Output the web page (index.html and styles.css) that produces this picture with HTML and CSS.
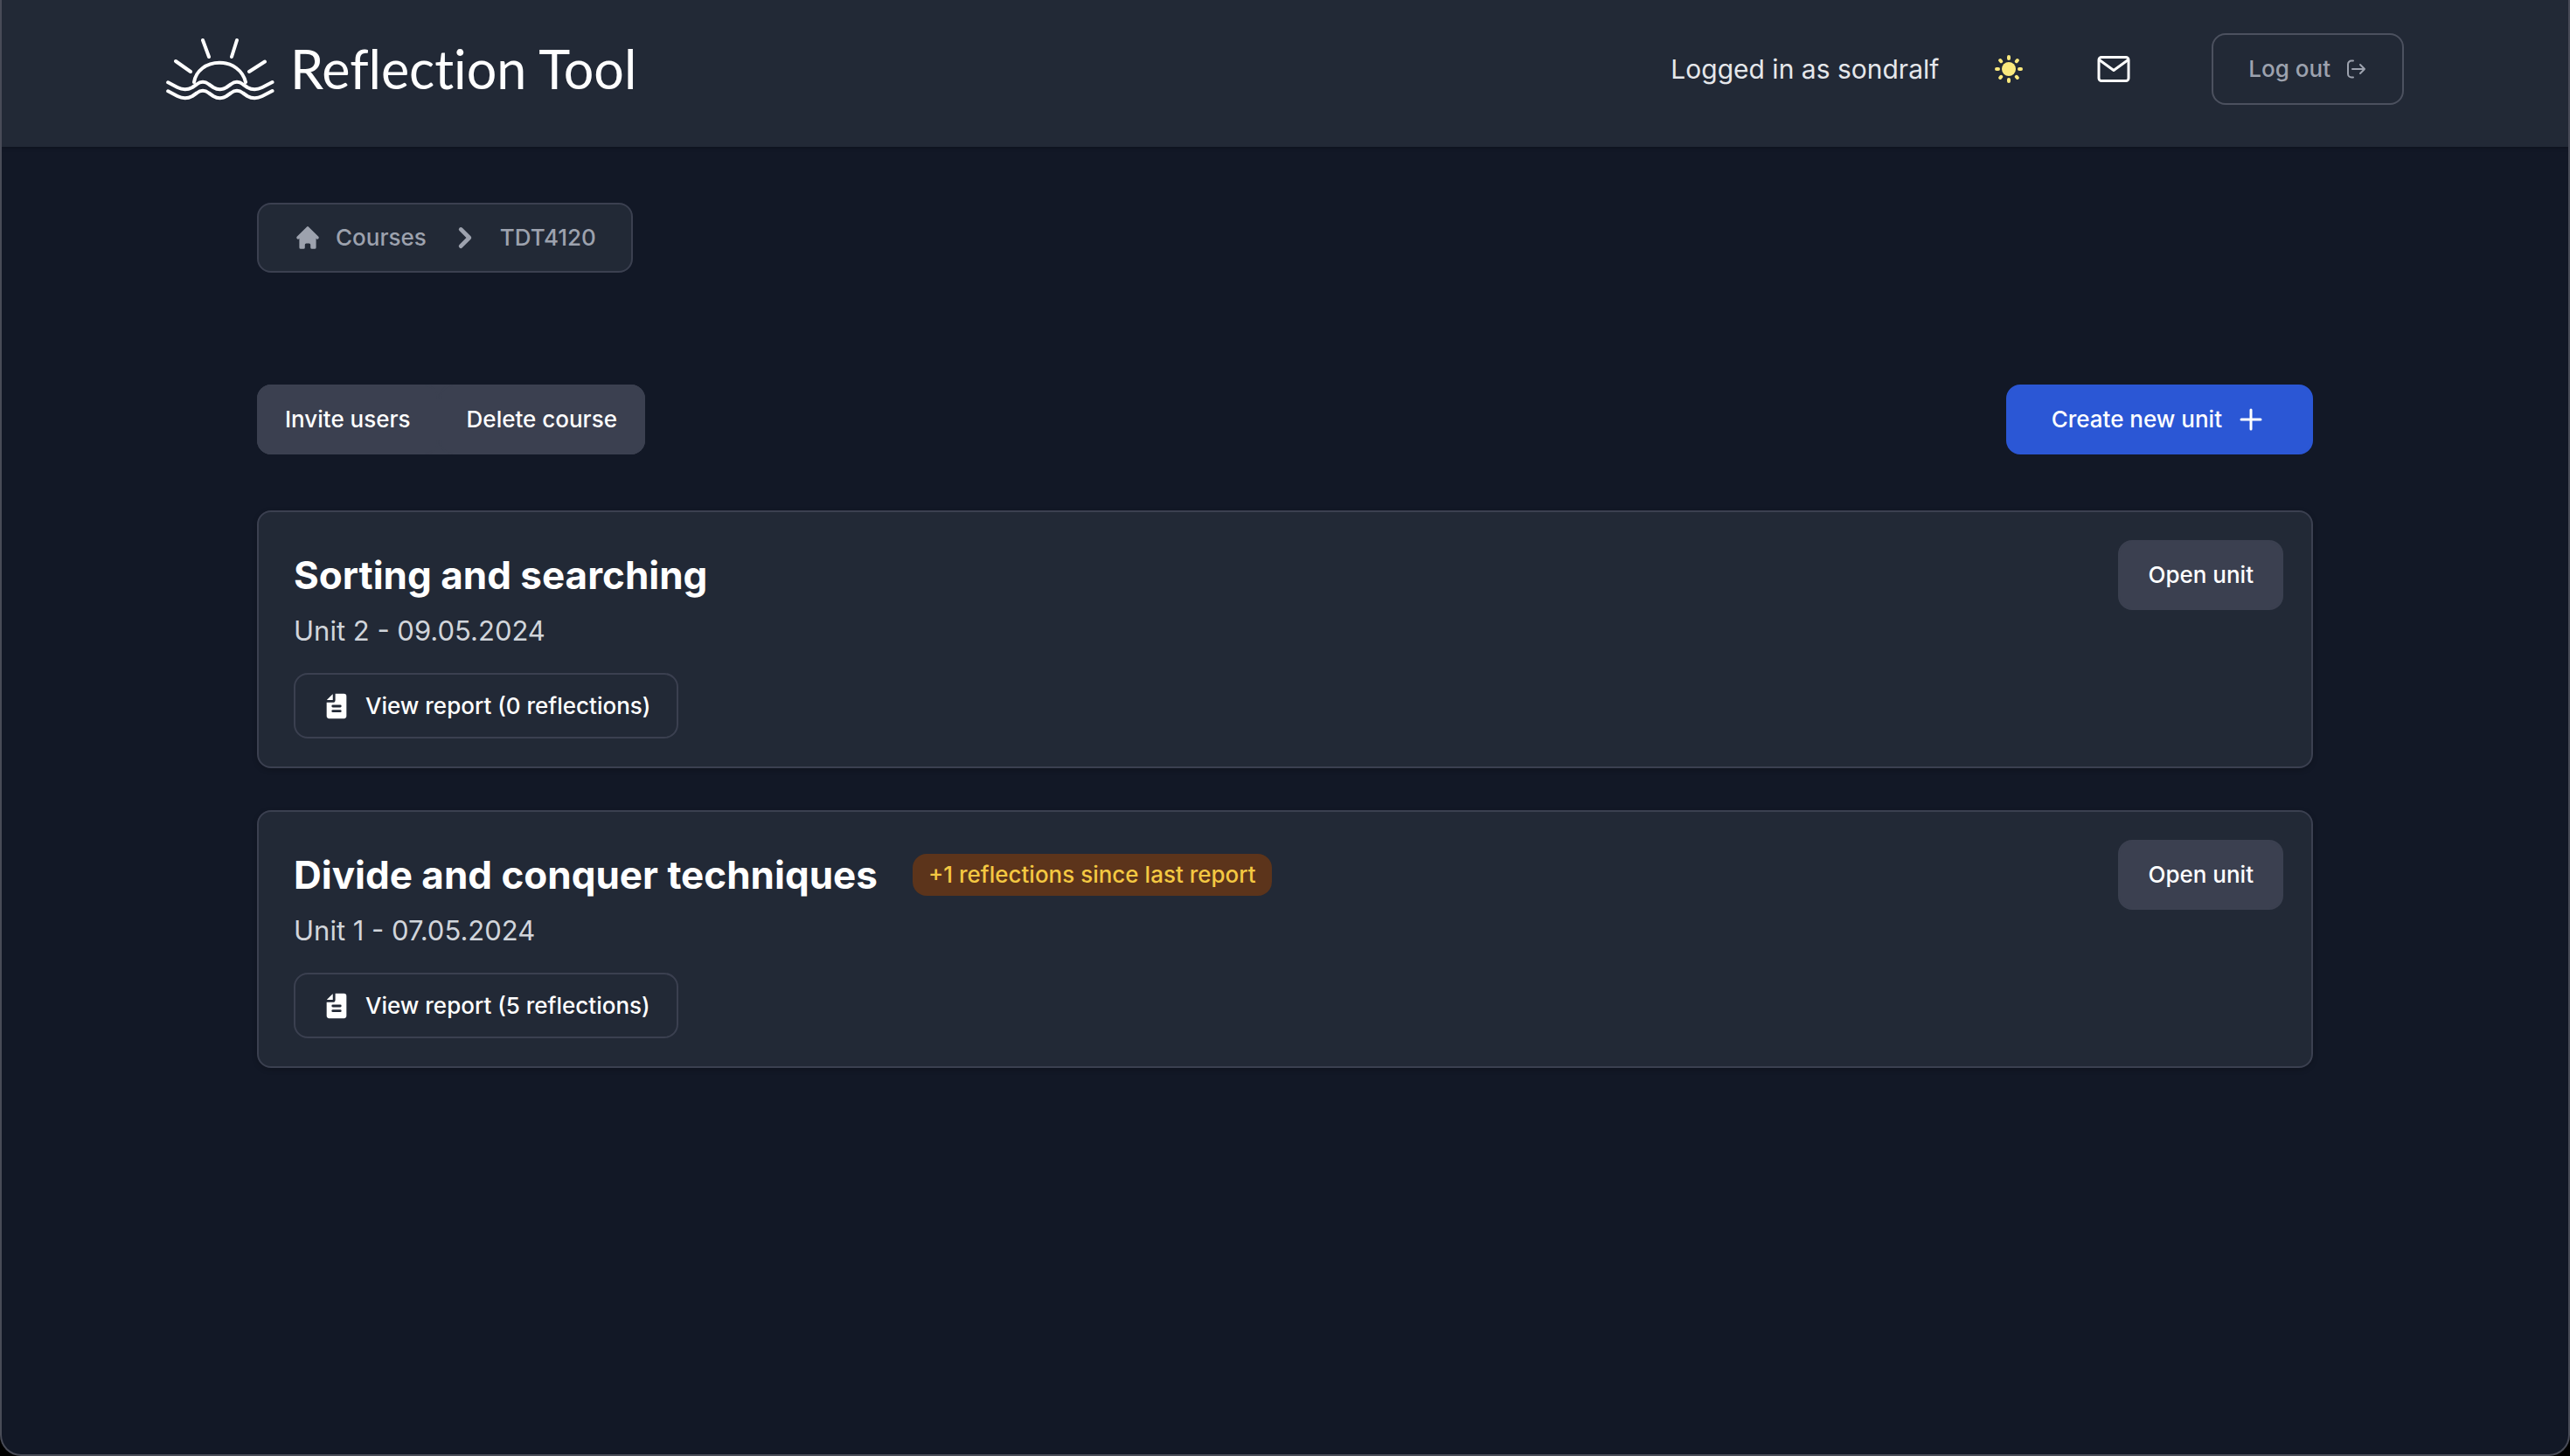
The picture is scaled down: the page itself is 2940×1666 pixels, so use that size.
FILE: index.html
```html
<!DOCTYPE html>
<html lang="en">
<head>
<meta charset="utf-8">
<title>Reflection Tool</title>
<link rel="stylesheet" href="styles.css">
</head>
<body>
<div class="app">
  <header class="header">
    <div class="header-inner">
      <a class="brand" href="#">
        <svg class="brand-logo" viewBox="0 0 124 72" fill="none" stroke="currentColor" stroke-width="4" stroke-linecap="round" stroke-linejoin="round" aria-hidden="true">
          <path d="M42 3l7 19M81 3l-6 19M11 27l17 12M113 27.500l-18 11.500"/>
          <path d="M32 51C34 38 46 28.700 61 28.700S88 38 91 51"/>
          <path d="M2.200 51.300L13 57Q21.800 61.500 30 57L35 53.500Q42 48 49 53.500L54 57Q61.500 61.500 69 57L74 53.500Q81 48 88 53.500L93 57Q101 61.500 110 57L121.500 51"/>
          <path d="M2.200 61.300L13 67Q21.800 71.500 30 67L35 63.500Q42 58 49 63.500L54 67Q61.500 71.500 69 67L74 63.500Q81 58 88 63.500L93 67Q101 71.500 110 67L121.500 61"/>
        </svg>
        <span class="brand-name">Reflection Tool</span>
      </a>
      <div class="header-tools">
        <span class="user">Logged in as sondralf</span>
        <button class="icon-button sun" type="button" aria-label="Toggle theme">
          <svg width="32" height="32" viewBox="0 0 32 32" aria-hidden="true">
            <circle cx="16" cy="16" r="8" fill="currentColor"/>
            <path d="M16 2v2M16 28v2M2 16h2M28 16h2M6.200 6l1 1.200M25.800 6l-1 1.200M6.200 26l1-1.200M25.800 26l-1-1.200" stroke="currentColor" stroke-width="4" stroke-linecap="round"/>
          </svg>
        </button>
        <button class="icon-button mail" type="button" aria-label="Messages">
          <svg width="38" height="32" viewBox="0 0 38 32" fill="none" stroke="currentColor" stroke-width="3" stroke-linejoin="round" aria-hidden="true">
            <rect x="2" y="2.500" width="34" height="27" rx="3"/>
            <path d="M2.500 5.500L19 17.500 35.500 5.500"/>
          </svg>
        </button>
        <button class="button button-outline logout" type="button">
          Log out
          <svg width="26" height="26" viewBox="0 0 26 26" fill="none" stroke="currentColor" stroke-width="2" stroke-linecap="round" stroke-linejoin="round" aria-hidden="true">
            <path d="M10 3.500H8a4 4 0 0 0-4 4v11a4 4 0 0 0 4 4h2M9 13h14M18 8l5 5-5 5"/>
          </svg>
        </button>
      </div>
    </div>
  </header>
  <main class="content">
    <nav class="breadcrumb" aria-label="Breadcrumb">
      <a class="crumb" href="#">
        <svg width="32" height="32" viewBox="0 0 20 20" fill="currentColor" aria-hidden="true"><path d="M10.707 2.293a1 1 0 00-1.414 0l-7 7a1 1 0 001.414 1.414L4 10.414V17a1 1 0 001 1h2a1 1 0 001-1v-2a1 1 0 011-1h2a1 1 0 011 1v2a1 1 0 001 1h2a1 1 0 001-1v-6.586l.293.293a1 1 0 001.414-1.414l-7-7z"/></svg>
        Courses
      </a>
      <svg class="crumb-separator" width="48" height="48" viewBox="0 0 20 20" fill="currentColor" aria-hidden="true"><path d="M7.293 14.707a1 1 0 010-1.414L10.586 10 7.293 6.707a1 1 0 011.414-1.414l4 4a1 1 0 010 1.414l-4 4a1 1 0 01-1.414 0z"/></svg>
      <a class="crumb" href="#">TDT4120</a>
    </nav>
    <div class="actions">
      <div class="button-group">
        <button class="button button-muted" type="button">Invite users</button>
        <button class="button button-muted" type="button">Delete course</button>
      </div>
      <button class="button button-primary" type="button">
        Create new unit
        <svg width="26" height="26" viewBox="0 0 26 26" fill="none" stroke="currentColor" stroke-width="3" stroke-linecap="round" aria-hidden="true"><path d="M13 2v22M2 13h22"/></svg>
      </button>
    </div>
    <section class="units">
      <article class="card">
        <div class="card-body">
          <div class="card-heading"><h2 class="card-title">Sorting and searching</h2></div>
          <p class="card-meta">Unit 2 - 09.05.2024</p>
          <button class="button button-report" type="button">
            <svg width="34" height="34" viewBox="0 0 24 24" fill="currentColor" fill-rule="evenodd" aria-hidden="true"><path d="M9 2.221V7H4.221a2 2 0 0 1 .365-.5L8.500 2.586A2 2 0 0 1 9 2.220ZM11 2v5a2 2 0 0 1-2 2H4v11a2 2 0 0 0 2 2h12a2 2 0 0 0 2-2V4a2 2 0 0 0-2-2h-7ZM8 16a1 1 0 0 1 1-1h6a1 1 0 1 1 0 2H9a1 1 0 0 1-1-1Zm1-5a1 1 0 1 0 0 2h6a1 1 0 1 0 0-2H9Z"/></svg>
            View report (0 reflections)
          </button>
        </div>
        <button class="button button-muted" type="button">Open unit</button>
      </article>
      <article class="card">
        <div class="card-body">
          <div class="card-heading"><h2 class="card-title">Divide and conquer techniques</h2><span class="badge">+1 reflections since last report</span></div>
          <p class="card-meta">Unit 1 - 07.05.2024</p>
          <button class="button button-report" type="button">
            <svg width="34" height="34" viewBox="0 0 24 24" fill="currentColor" fill-rule="evenodd" aria-hidden="true"><path d="M9 2.221V7H4.221a2 2 0 0 1 .365-.5L8.500 2.586A2 2 0 0 1 9 2.220ZM11 2v5a2 2 0 0 1-2 2H4v11a2 2 0 0 0 2 2h12a2 2 0 0 0 2-2V4a2 2 0 0 0-2-2h-7ZM8 16a1 1 0 0 1 1-1h6a1 1 0 1 1 0 2H9a1 1 0 0 1-1-1Zm1-5a1 1 0 1 0 0 2h6a1 1 0 1 0 0-2H9Z"/></svg>
            View report (5 reflections)
          </button>
        </div>
        <button class="button button-muted" type="button">Open unit</button>
      </article>
    </section>
  </main>
</div>
</body>
</html>
```
FILE: styles.css
```css
*, *::before, *::after { box-sizing: border-box; }

html { background: #000; }

body {
  margin: 0;
  font-family: Inter, "Liberation Sans", sans-serif;
  font-size: 26px;
  line-height: 40px;
  color: #fff;
}

h2, p { margin: 0; }

svg { display: block; flex: none; }

a { color: inherit; text-decoration: none; }

.app {
  min-height: 100vh;
  border: 2px solid #484b57;
  border-top: 0;
  border-radius: 0 0 24px 24px;
  background: #121826;
  overflow: hidden;
}

.header {
  padding: 38px 32px 48px;
  background: #222936;
  box-shadow: 0 2px 4px rgba(0, 0, 0, 0.2);
}

.header-inner {
  display: flex;
  align-items: center;
  justify-content: space-between;
  max-width: 2560px;
  margin: 0 auto;
}

.brand { display: flex; align-items: center; gap: 18px; }

.brand-logo { width: 124px; height: 72px; }

.brand-name {
  font-family: Lato, sans-serif;
  font-size: 61px;
  font-variant-ligatures: none;
  line-height: 72px;
}

.header-tools { display: flex; align-items: center; }

.user { font-size: 30px; color: #e5e7eb; }

.icon-button {
  display: flex;
  padding: 0;
  border: 0;
  background: none;
  cursor: pointer;
}

.sun { margin-left: 64px; color: #fae97d; }

.mail { margin-left: 85px; color: #fff; }

.button {
  display: flex;
  align-items: center;
  justify-content: center;
  height: 80px;
  padding: 0 32px;
  border: 2px solid transparent;
  border-radius: 16px;
  background: none;
  color: #fff;
  font: inherit;
  font-weight: 500;
  white-space: nowrap;
  cursor: pointer;
}

.button-outline { border-color: #4c515f; color: #9da2ae; }

.logout { gap: 16px; height: 82px; padding: 0 40px; margin-left: 93px; }

.button-muted { border-color: #3b4050; background: #3b4050; }

.button-primary {
  gap: 20px;
  padding: 0 56px 0 50px;
  border-color: #2b57d5;
  background: #2b57d5;
}

.content { width: 80vw; margin: 0 auto; padding: 64px 0; }

.breadcrumb {
  display: flex;
  align-items: center;
  width: fit-content;
  height: 80px;
  padding: 0 40px;
  border: 2px solid #3b4050;
  border-radius: 16px;
  background: #222936;
  color: #9da2ae;
  font-weight: 500;
}

.crumb { display: flex; align-items: center; gap: 16px; }

.crumb-separator { margin: 0 16px 0 20px; }

.actions {
  display: flex;
  justify-content: space-between;
  margin: 128px 0 64px;
}

.button-group {
  display: flex;
  border-radius: 16px;
  background: #3b4050;
}

.button-group .button { padding: 0 30px; }

.units { display: grid; gap: 48px; }

.card {
  display: flex;
  align-items: flex-start;
  justify-content: space-between;
  padding: 32px;
  border: 2px solid #3b4050;
  border-radius: 16px;
  background: #222936;
  box-shadow: 0 2px 6px rgba(0, 0, 0, 0.2);
}

.card-body { padding-left: 8px; }

.card-heading { display: flex; align-items: center; gap: 40px; height: 80px; }

.card-title { font-size: 44px; font-weight: 700; line-height: 56px; }

.card-meta { margin-bottom: 24px; font-size: 31px; line-height: 48px; color: #d1d5db; }

.badge {
  padding: 4px 18px;
  border-radius: 16px;
  background: #5c341b;
  color: #f4c842;
  font-weight: 500;
}

.button-report { gap: 16px; height: 75px; padding: 0 30px; border-color: #3b4050; }
```
